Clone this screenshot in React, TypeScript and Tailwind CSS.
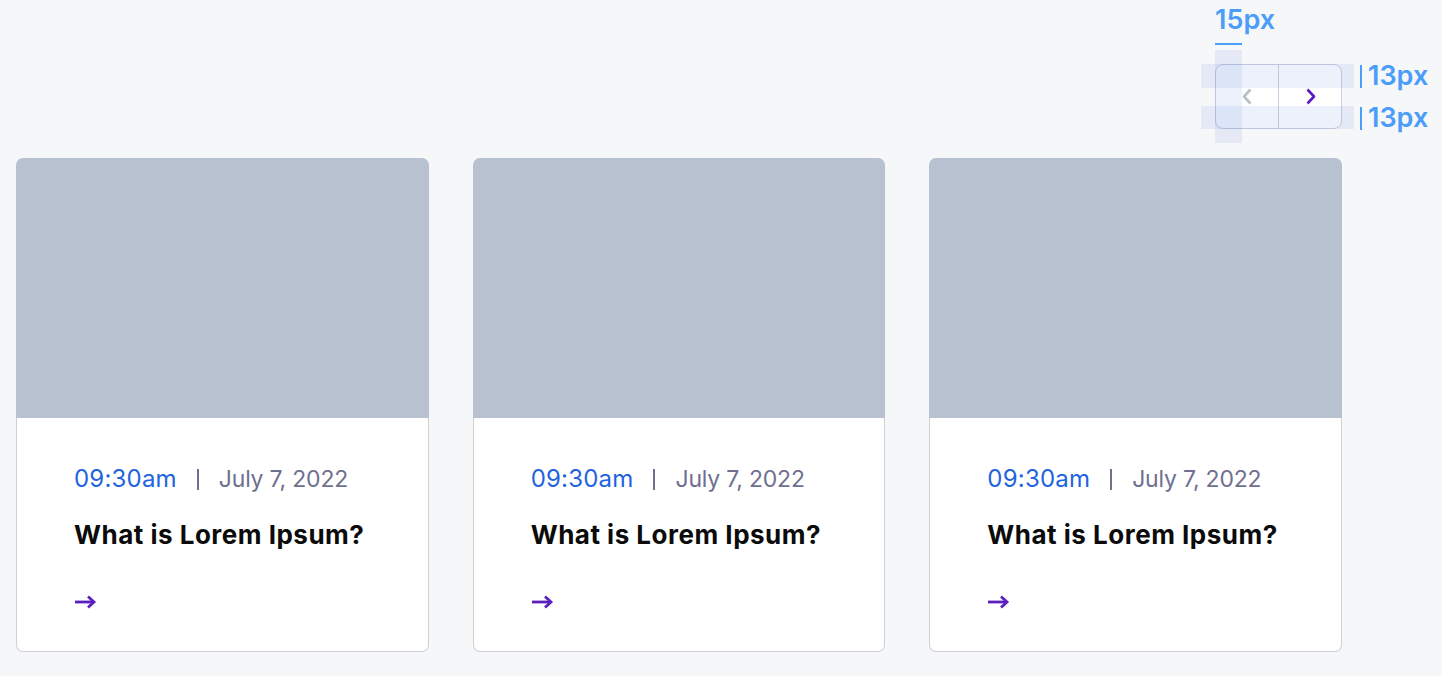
import React from 'react';

const posts = [
  { time: '09:30am', date: 'July 7, 2022', title: 'What is Lorem Ipsum?' },
  { time: '09:30am', date: 'July 7, 2022', title: 'What is Lorem Ipsum?' },
  { time: '09:30am', date: 'July 7, 2022', title: 'What is Lorem Ipsum?' },
];

function Chevron({ dir, className }: { dir: 'left' | 'right'; className: string }) {
  return (
    <svg width="11" height="17" viewBox="0 0 11 17" fill="none" className={className}>
      {dir === 'left' ? (
        <path d="M8.5 1.5L2 8.5l6.5 7" stroke="currentColor" strokeWidth="2.6" strokeLinejoin="round" />
      ) : (
        <path d="M2.5 1.5L9 8.5l-6.5 7" stroke="currentColor" strokeWidth="2.6" strokeLinejoin="round" />
      )}
    </svg>
  );
}

function ArrowRight() {
  return (
    <svg width="23" height="14" viewBox="0 0 23 14" fill="none" className="text-[#5b1fc0]">
      <path d="M1 7h19" stroke="currentColor" strokeWidth="2.8" />
      <path d="M14 1.5L20 7l-6 5.5" stroke="currentColor" strokeWidth="2.8" strokeLinejoin="miter" />
    </svg>
  );
}

function SliderNav() {
  return (
    <div className="relative mt-[64px] mb-[29px]">
      {/* spacing annotations */}
      <div className="absolute -top-[64px] left-0 w-[27px] text-[27px] leading-[40px] font-semibold text-[#4b9df7] whitespace-nowrap">
        15px
      </div>
      <div className="absolute -top-[21px] left-0 w-[27px] h-[2px] bg-[#4b9df7]" />
      <div className="absolute -top-[14px] left-0 w-[27px] h-[93px] bg-[#4a78d8]/10" />
      <div className="absolute top-0 -left-[14px] w-[153px] h-[24px] bg-[#4a78d8]/10" />
      <div className="absolute top-[42px] -left-[14px] w-[153px] h-[23px] bg-[#4a78d8]/10" />
      <div className="absolute top-0 left-[145px] flex items-center h-[24px] gap-[6px] text-[27px] font-semibold text-[#4b9df7] whitespace-nowrap">
        <span className="w-[2px] h-[23px] bg-[#4b9df7]" />
        <span>13px</span>
      </div>
      <div className="absolute top-[42px] left-[145px] flex items-center h-[24px] gap-[6px] text-[27px] font-semibold text-[#4b9df7] whitespace-nowrap">
        <span className="w-[2px] h-[23px] bg-[#4b9df7]" />
        <span>13px</span>
      </div>

      <div className="flex h-[65px] w-[127px] rounded-[8px] border border-[#c9d0e0] bg-white">
        <button className="flex flex-1 items-center justify-center border-r border-[#c9d0e0]">
          <Chevron dir="left" className="text-[#b9c0cc]" />
        </button>
        <button className="flex flex-1 items-center justify-center">
          <Chevron dir="right" className="text-[#5b1fc0]" />
        </button>
      </div>
    </div>
  );
}

export default function App() {
  return (
    <div className="min-h-[676px] bg-[#f6f7f9] px-[16px] font-['Inter',sans-serif]">
      <div className="w-[1326px]">
        <div className="flex justify-end">
          <SliderNav />
        </div>

        <div className="flex gap-[44px]">
          {posts.map((post, idx) => (
            <div key={idx} className="w-[413px] flex flex-col">
              <div className="h-[260px] rounded-t-[7px] bg-[#b8c1d0]" />
              <div className="h-[234px] rounded-b-[7px] border border-t-0 border-[#cfd0d3] bg-white pl-[57px] pt-[45px]">
                <div className="flex items-center leading-[32px]">
                  <span className="text-[24px] tracking-[0.2px] text-[#1f63e0]">{post.time}</span>
                  <span className="mx-[20px] h-[21px] w-[2px] bg-[#6f6f8f]" />
                  <span className="text-[23px] tracking-[-0.2px] text-[#6f6f8f]">{post.date}</span>
                </div>
                <h3 className="mt-[24px] text-[26px] leading-[32px] font-bold text-[#0b0b0b] tracking-[0.5px]">
                  {post.title}
                </h3>
                <div className="mt-[44px]">
                  <ArrowRight />
                </div>
              </div>
            </div>
          ))}
        </div>
      </div>
    </div>
  );
}
